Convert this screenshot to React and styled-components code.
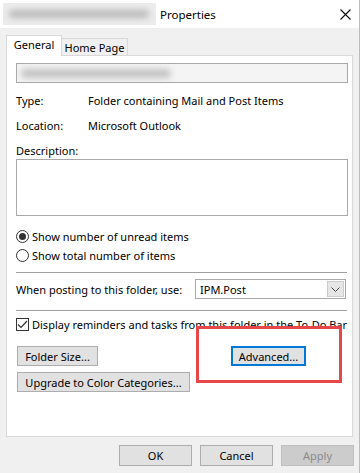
import React from 'react';
import styled, { createGlobalStyle } from 'styled-components';

const GlobalStyle = createGlobalStyle`
    html, body {
        margin: 0;
        padding: 0;
        background: #fff;
    }
    * {
        box-sizing: border-box;
    }
`;

const Window = styled.div`
    width: 360px;
    height: 473px;
    background: #f0f0f0;
    border-right: 1px solid #9ec2e8;
    font-family: "Noto Sans", "Open Sans", sans-serif;
    font-size: 11px;
    color: #000;
    white-space: nowrap;
    display: flex;
    flex-direction: column;
    overflow: hidden;
`;

const TitleBar = styled.div`
    height: 28px;
    background: #fff;
    display: flex;
    align-items: center;
    padding: 0 8px 0 3px;
`;

const BlurredName = styled.div`
    width: 153px;
    height: 22px;
    background: #ececec;
    display: flex;
    align-items: center;
    padding-left: 6px;
    overflow: hidden;

    span {
        width: 140px;
        height: 8px;
        background: #b9b9b9;
        border-radius: 4px;
        filter: blur(3px);
    }
`;

const Title = styled.div`
    font-size: 11.5px;
    margin-left: 4px;
    flex: 1;
`;

const CloseButton = styled.div`
    width: 12px;
    height: 12px;
    display: flex;
    align-items: center;
    justify-content: center;
`;

const Body = styled.div`
    flex: 1;
    display: flex;
    flex-direction: column;
    padding: 7px 6px 0 6px;
`;

const TabRow = styled.div`
    display: flex;
    align-items: flex-end;
    height: 21px;
    position: relative;
    z-index: 1;
    margin-bottom: -1px;
`;

const Tab = styled.div`
    height: ${({active}) => active ? '21px' : '18px'};
    width: ${({width}) => width};
    background: ${({active}) => active ? '#fff' : '#f0f0f0'};
    border: 1px solid #d9d9d9;
    border-bottom: ${({active}) => active ? 'none' : '1px solid #d9d9d9'};
    border-left: ${({first}) => first ? '1px solid #d9d9d9' : 'none'};
    display: flex;
    align-items: center;
    justify-content: center;
    padding-bottom: ${({active}) => active ? '3px' : '0'};
`;

const Panel = styled.div`
    height: 382px;
    background: #fff;
    border: 1px solid #d9d9d9;
    padding: 7px 4px 0 9px;
    display: flex;
    flex-direction: column;
    position: relative;
`;

const NameField = styled.div`
    height: 20px;
    border: 1px solid #a9a9a9;
    background: #f4f4f4;
    display: flex;
    align-items: center;
    padding-left: 4px;

    span {
        width: 150px;
        height: 9px;
        background: #c2c2c2;
        border-radius: 5px;
        filter: blur(3px);
    }
`;

const InfoRow = styled.div`
    display: flex;
    height: 18px;
    line-height: 18px;
    margin-top: ${({gap}) => gap};
`;

const InfoLabel = styled.div`
    width: 72px;
`;

const Label = styled.div`
    height: 16px;
    line-height: 16px;
    margin-top: 8px;
`;

const TextArea = styled.div`
    height: 57px;
    border: 1px solid #a9a9a9;
    background: #fff;
`;

const OptionRow = styled.label`
    display: flex;
    align-items: center;
    height: 18px;
    margin-top: ${({gap}) => gap};
    gap: 3px;
`;

const Radio = styled.span`
    width: 13px;
    height: 13px;
    border-radius: 50%;
    border: 1px solid #333;
    display: flex;
    align-items: center;
    justify-content: center;

    &::after {
        content: "";
        display: ${({checked}) => checked ? 'block' : 'none'};
        width: 7px;
        height: 7px;
        border-radius: 50%;
        background: #333;
    }
`;

const Checkbox = styled.span`
    width: 13px;
    height: 13px;
    border: 1px solid #333;
    display: flex;
    align-items: center;
    justify-content: center;
`;

const Separator = styled.div`
    height: 1px;
    background: #a0a0a0;
    margin-top: ${({gap}) => gap};
    margin-right: 1px;
`;

const PostingRow = styled.div`
    display: flex;
    align-items: center;
    justify-content: space-between;
    height: 20px;
    margin-top: 6px;
`;

const Select = styled.div`
    width: 151px;
    height: 20px;
    border: 1px solid #a9a9a9;
    display: flex;
    align-items: center;
    justify-content: space-between;
    padding: 0 1px 0 4px;
    margin-right: 2px;
`;

const DropButton = styled.div`
    width: 17px;
    height: 16px;
    background: #e6e6e6;
    border: 1px solid #cccccc;
    display: flex;
    align-items: center;
    justify-content: center;
`;

const ButtonGrid = styled.div`
    display: grid;
    grid-template-columns: 214px 75px;
    row-gap: 6px;
    margin: 13px 0 0 1px;
    align-items: start;
`;

const Button = styled.div`
    height: ${({tall}) => tall ? '21px' : '20px'};
    width: ${({width}) => width || 'auto'};
    justify-self: start;
    background: ${({disabled}) => disabled ? '#cccccc' : '#e1e1e1'};
    color: ${({disabled}) => disabled ? '#8a8a8a' : '#000'};
    border: ${({focused, disabled}) => focused ? '2px solid #0078d7' : disabled ? '1px solid #bfbfbf' : '1px solid #adadad'};
    display: flex;
    align-items: center;
    justify-content: center;
`;

const Highlight = styled.div`
    position: absolute;
    left: 189px;
    top: 270px;
    width: 146px;
    height: 57px;
    border: 3px solid #e8474a;
    pointer-events: none;
`;

const Footer = styled.div`
    display: flex;
    justify-content: flex-end;
    gap: 8px;
    margin: 8px -1px 0 0;
`;

const App = () => {
    return (
        <>
            <GlobalStyle />
            <Window>
                <TitleBar>
                    <BlurredName><span /></BlurredName>
                    <Title>Properties</Title>
                    <CloseButton>
                        <svg width="11" height="11" viewBox="0 0 11 11">
                            <path d="M0.5 0.5 L10.5 10.5 M10.5 0.5 L0.5 10.5" stroke="#111" strokeWidth="1.1" fill="none" />
                        </svg>
                    </CloseButton>
                </TitleBar>
                <Body>
                    <TabRow>
                        <Tab active first width="56px">General</Tab>
                        <Tab width="66px">Home Page</Tab>
                    </TabRow>
                    <Panel>
                        <NameField><span /></NameField>
                        <InfoRow gap="9px">
                            <InfoLabel>Type:</InfoLabel>
                            <div>Folder containing Mail and Post Items</div>
                        </InfoRow>
                        <InfoRow gap="7px">
                            <InfoLabel>Location:</InfoLabel>
                            <div>Microsoft Outlook</div>
                        </InfoRow>
                        <Label>Description:</Label>
                        <TextArea />
                        <OptionRow gap="11px">
                            <Radio checked />
                            Show number of unread items
                        </OptionRow>
                        <OptionRow gap="1px">
                            <Radio />
                            Show total number of items
                        </OptionRow>
                        <Separator gap="8px" />
                        <PostingRow>
                            <span>When posting to this folder, use:</span>
                            <Select>
                                <span>IPM.Post</span>
                                <DropButton>
                                    <svg width="9" height="5" viewBox="0 0 9 5">
                                        <path d="M0.5 0.5 L4.5 4.5 L8.5 0.5" stroke="#444" strokeWidth="1" fill="none" />
                                    </svg>
                                </DropButton>
                            </Select>
                        </PostingRow>
                        <Separator gap="11px" />
                        <OptionRow gap="4px">
                            <Checkbox>
                                <svg width="11" height="9" viewBox="0 0 11 9">
                                    <path d="M1 4.5 L4 7.5 L10 1" stroke="#333" strokeWidth="1.2" fill="none" />
                                </svg>
                            </Checkbox>
                            Display reminders and tasks from this folder in the To-Do Bar
                        </OptionRow>
                        <ButtonGrid>
                            <Button width="81px">Folder Size...</Button>
                            <Button width="75px" focused>Advanced...</Button>
                            <Button width="173px">Upgrade to Color Categories...</Button>
                        </ButtonGrid>
                        <Highlight />
                    </Panel>
                    <Footer>
                        <Button width="73px" tall>OK</Button>
                        <Button width="73px" tall>Cancel</Button>
                        <Button width="73px" tall disabled>Apply</Button>
                    </Footer>
                </Body>
            </Window>
        </>
    );
};

export default App;
